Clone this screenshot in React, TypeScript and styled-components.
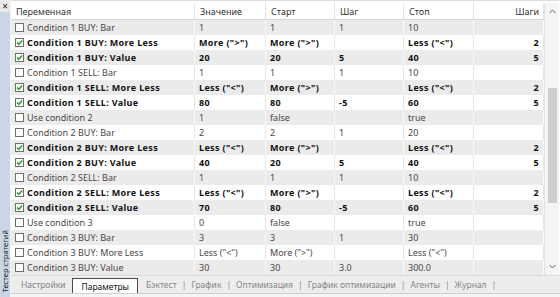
import React from "react";
import styled, { createGlobalStyle } from "styled-components";

const GlobalStyle = createGlobalStyle`
    html, body {
        margin: 0;
        padding: 0;
        background: #f0f0f0;
    }
    body {
        font-family: "Noto Sans", "Open Sans", sans-serif;
        font-size: 9px;
        color: #1a1a1a;
    }
`;

const COLS = "184px 71px 69px 69px 70px 70px";

const Window = styled.div`
    width: 560px;
    height: 297px;
    display: grid;
    grid-template-columns: 11px 1fr;
    overflow: hidden;
`;

const SideBar = styled.div`
    display: flex;
    flex-direction: column;
    background: #c9d6e6;
    border-right: 1px solid #f4f4f4;
`;

const CloseBox = styled.div`
    height: 12px;
    background: #e9e9e9;
    display: flex;
    align-items: center;
    justify-content: center;
    font-size: 10px;
    line-height: 1;
    color: #222;
`;

const SideTitle = styled.div`
    margin-top: auto;
    margin-bottom: 6px;
    writing-mode: vertical-rl;
    transform: rotate(180deg);
    align-self: center;
    font-size: 7.6px;
    line-height: 10px;
    color: #222;
    white-space: nowrap;
`;

const Main = styled.div`
    display: flex;
    flex-direction: column;
    min-width: 0;
`;

const TableArea = styled.div`
    flex: 1;
    display: flex;
    min-height: 0;
    padding-top: 2px;
    background: #fff;
    border-top: 1px solid #dcdcdc;
    overflow: hidden;
`;

const Table = styled.div`
    width: 533px;
    display: flex;
    flex-direction: column;
`;

const HeaderRow = styled.div`
    display: grid;
    grid-template-columns: ${COLS};
    height: 17px;
    background: #fff;
    border-bottom: 1px solid #d6d6d6;
    box-sizing: border-box;
`;

const HeaderCell = styled.div<{ $right?: boolean }>`
    display: flex;
    align-items: center;
    justify-content: ${(p) => (p.$right ? "flex-end" : "flex-start")};
    padding: 0 4px 0 5px;
    border-right: 1px solid #e4e4e4;
    color: #333;
`;

const Row = styled.div<{ $odd: boolean; $active: boolean }>`
    display: grid;
    grid-template-columns: ${COLS};
    height: 15px;
    flex-shrink: 0;
    background: ${(p) => (p.$odd ? "#ebebeb" : "#fff")};
    font-weight: ${(p) => (p.$active ? 700 : 400)};
    letter-spacing: ${(p) => (p.$active ? "0.35px" : "0")};
    color: ${(p) => (p.$active ? "#111" : "#4d4747")};
    --sep: ${(p) => (p.$odd ? "#f8f8f8" : "#e6e6e6")};
`;

const Cell = styled.div<{ $right?: boolean }>`
    display: flex;
    align-items: center;
    justify-content: ${(p) => (p.$right ? "flex-end" : "flex-start")};
    padding: 0 4px;
    border-right: 1px solid var(--sep);
    white-space: nowrap;
    overflow: hidden;
`;

const NameCell = styled(Cell)`
    gap: 3px;
`;

const Box = styled.svg`
    flex-shrink: 0;
    width: 9px;
    height: 9px;
`;

const ScrollBar = styled.div`
    width: 15px;
    display: flex;
    flex-direction: column;
    align-items: center;
    background: #f5f5f5;
    border-left: 1px solid #e2e2e2;
    box-sizing: border-box;
`;

const Arrow = styled.svg`
    width: 7px;
    height: 5px;
    margin: 6px 0;
    flex-shrink: 0;
`;

const Track = styled.div`
    flex: 1;
    width: 100%;
    display: flex;
    justify-content: center;
`;

const Thumb = styled.div`
    width: 9px;
    height: 115px;
    margin-top: 68px;
    background: #cdcdcd;
`;

const TabBar = styled.div`
    height: 18px;
    display: flex;
    align-items: stretch;
    padding-left: 10px;
    background: #ededed;
    border-top: 1px solid #dadada;
    box-sizing: border-box;
    color: #858585;
    font-size: 8.5px;
`;

const Tab = styled.div<{ $active?: boolean }>`
    display: flex;
    align-items: center;
    padding: 0 ${(p) => (p.$active ? "8px" : "0")};
    margin: ${(p) => (p.$active ? "2px 8px 0 7px" : "0")};
    background: ${(p) => (p.$active ? "#fff" : "transparent")};
    border: ${(p) => (p.$active ? "1px solid #4a4a4a" : "none")};
    border-bottom: none;
    color: ${(p) => (p.$active ? "#111" : "#858585")};
    white-space: nowrap;
`;

const Sep = styled.span`
    display: flex;
    align-items: center;
    padding: 0 5px;
    color: #8a8a8a;
`;

const Bottom = styled.div`
    height: 5px;
    background: #f5f5f5;
    border-top: 1px solid #cfcfcf;
`;

type Param = {
    name: string;
    on: boolean;
    value: string;
    start: string;
    step: string;
    stop: string;
    steps: string;
};

const params: Param[] = [
    { name: "Condition 1 BUY: Bar", on: false, value: "1", start: "1", step: "1", stop: "10", steps: "" },
    { name: "Condition 1 BUY: More Less", on: true, value: 'More (">")', start: 'More (">")', step: "", stop: 'Less ("<")', steps: "2" },
    { name: "Condition 1 BUY: Value", on: true, value: "20", start: "20", step: "5", stop: "40", steps: "5" },
    { name: "Condition 1 SELL: Bar", on: false, value: "1", start: "1", step: "1", stop: "10", steps: "" },
    { name: "Condition 1 SELL: More Less", on: true, value: 'Less ("<")', start: 'More (">")', step: "", stop: 'Less ("<")', steps: "2" },
    { name: "Condition 1 SELL: Value", on: true, value: "80", start: "80", step: "-5", stop: "60", steps: "5" },
    { name: "Use condition 2", on: false, value: "1", start: "false", step: "", stop: "true", steps: "" },
    { name: "Condition 2 BUY: Bar", on: false, value: "2", start: "2", step: "1", stop: "20", steps: "" },
    { name: "Condition 2 BUY: More Less", on: true, value: 'Less ("<")', start: 'More (">")', step: "", stop: 'Less ("<")', steps: "2" },
    { name: "Condition 2 BUY: Value", on: true, value: "40", start: "20", step: "5", stop: "40", steps: "5" },
    { name: "Condition 2 SELL: Bar", on: false, value: "1", start: "1", step: "1", stop: "10", steps: "" },
    { name: "Condition 2 SELL: More Less", on: true, value: 'Less ("<")', start: 'More (">")', step: "", stop: 'Less ("<")', steps: "2" },
    { name: "Condition 2 SELL: Value", on: true, value: "70", start: "80", step: "-5", stop: "60", steps: "5" },
    { name: "Use condition 3", on: false, value: "0", start: "false", step: "", stop: "true", steps: "" },
    { name: "Condition 3 BUY: Bar", on: false, value: "3", start: "3", step: "1", stop: "30", steps: "" },
    { name: "Condition 3 BUY: More Less", on: false, value: 'Less ("<")', start: 'More (">")', step: "", stop: 'Less ("<")', steps: "" },
    { name: "Condition 3 BUY: Value", on: false, value: "30", start: "30", step: "3.0", stop: "300.0", steps: "" },
];

const tabs = ["Настройки", "Параметры", "Бэктест", "График", "Оптимизация", "График оптимизации", "Агенты", "Журнал"];

function CheckBox({ on }: { on: boolean }) {
    return (
        <Box viewBox="0 0 9 9">
            <rect x="0.5" y="0.5" width="8" height="8" fill="#fff" stroke="#6e6e6e" />
            {on && <path d="M2 4.4 L3.8 6.3 L7.2 2.4" fill="none" stroke="#2e9b2e" strokeWidth="1.5" />}
        </Box>
    );
}

function App() {
    return (
        <Window>
            <GlobalStyle />
            <SideBar>
                <CloseBox>×</CloseBox>
                <SideTitle>Тестер стратегий</SideTitle>
            </SideBar>

            <Main>
                <TableArea>
                    <Table>
                        <HeaderRow>
                            <HeaderCell>Переменная</HeaderCell>
                            <HeaderCell>Значение</HeaderCell>
                            <HeaderCell>Старт</HeaderCell>
                            <HeaderCell>Шаг</HeaderCell>
                            <HeaderCell>Стоп</HeaderCell>
                            <HeaderCell $right>Шаги</HeaderCell>
                        </HeaderRow>
                        {params.map((p, i) => (
                            <Row key={p.name} $odd={i % 2 === 0} $active={p.on}>
                                <NameCell>
                                    <CheckBox on={p.on} />
                                    {p.name}
                                </NameCell>
                                <Cell>{p.value}</Cell>
                                <Cell>{p.start}</Cell>
                                <Cell>{p.step}</Cell>
                                <Cell>{p.stop}</Cell>
                                <Cell $right>{p.steps}</Cell>
                            </Row>
                        ))}
                    </Table>
                    <ScrollBar>
                        <Arrow viewBox="0 0 7 5">
                            <path d="M0.5 4 L3.5 1 L6.5 4" fill="none" stroke="#606060" />
                        </Arrow>
                        <Track>
                            <Thumb />
                        </Track>
                        <Arrow viewBox="0 0 7 5">
                            <path d="M0.5 1 L3.5 4 L6.5 1" fill="none" stroke="#606060" />
                        </Arrow>
                    </ScrollBar>
                </TableArea>

                <TabBar>
                    {tabs.map((t, i) => (
                        <React.Fragment key={t}>
                            <Tab $active={i === 1}>{t}</Tab>
                            {i >= 2 && <Sep>|</Sep>}
                        </React.Fragment>
                    ))}
                </TabBar>
                <Bottom />
            </Main>
        </Window>
    );
}

export default React.memo(App);
